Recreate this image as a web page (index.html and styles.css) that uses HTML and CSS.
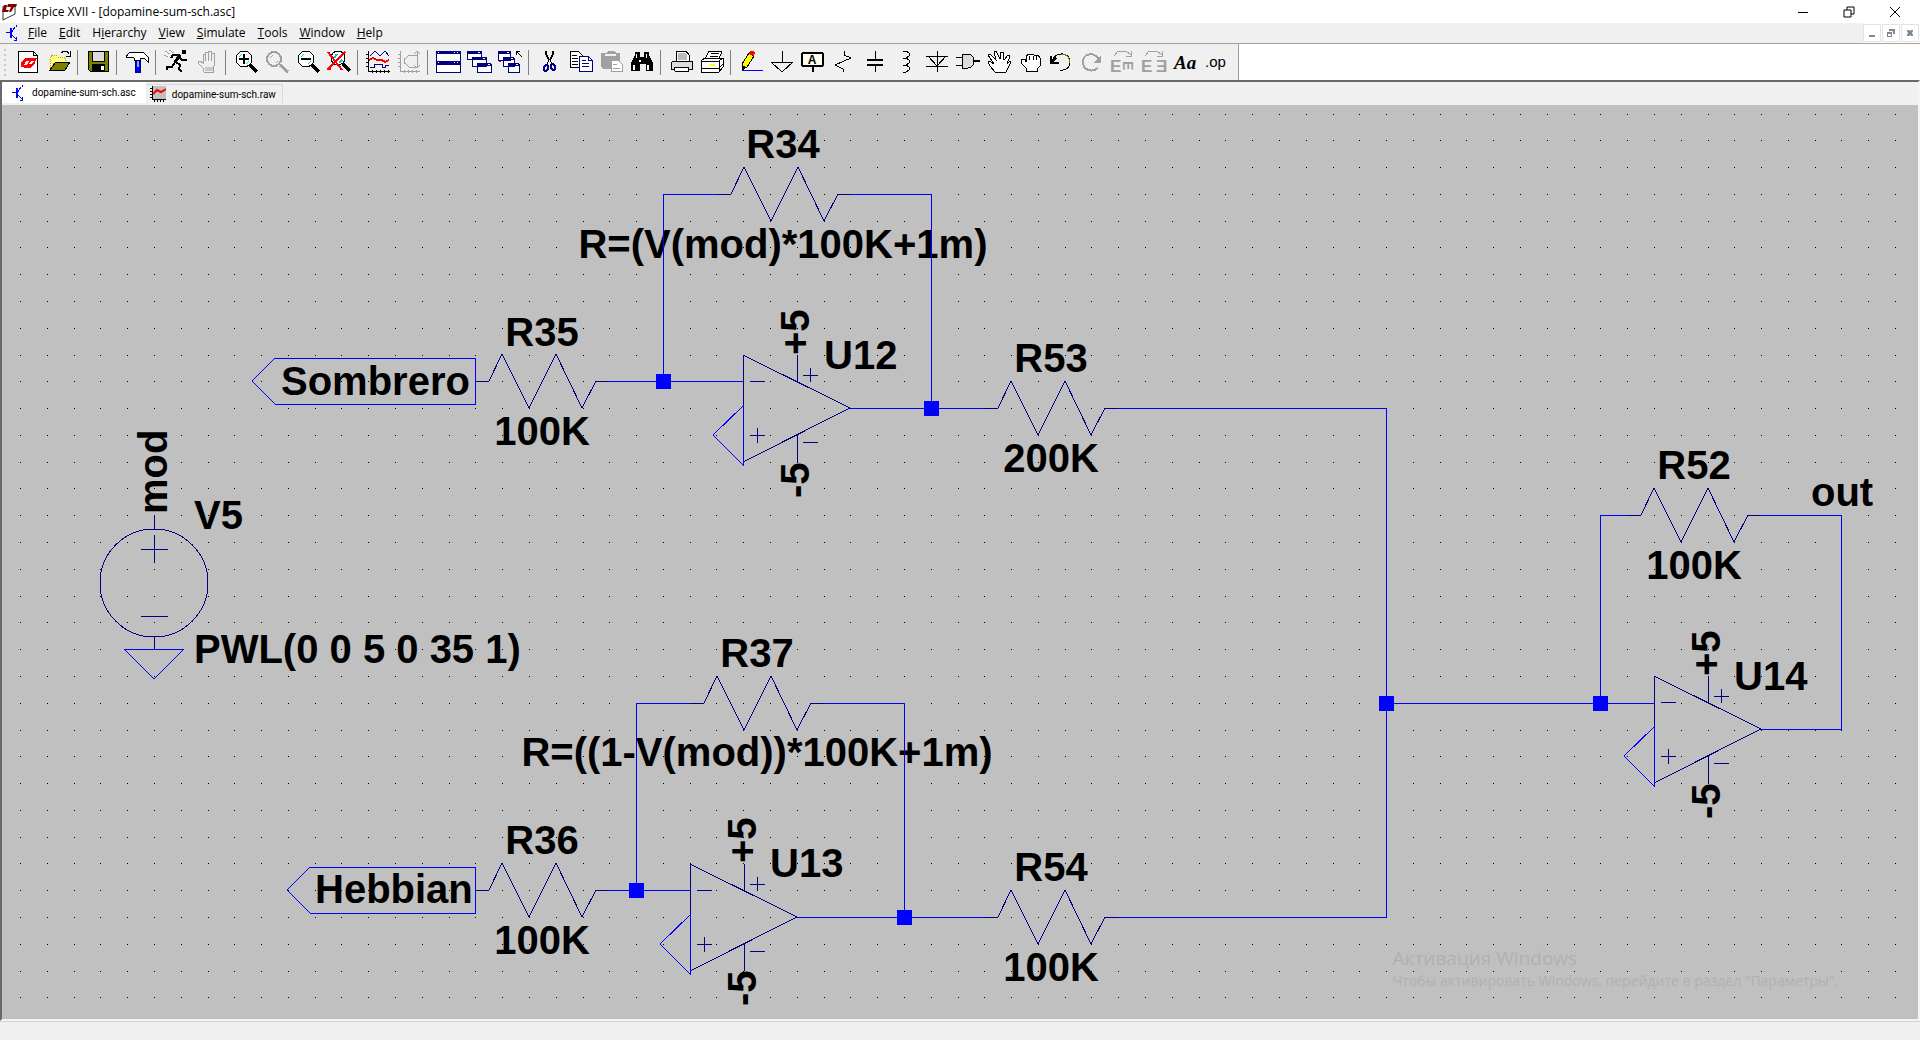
FILE: index.html
```html
<!DOCTYPE html>
<html lang="en">
<head>
<meta charset="utf-8">
<title>LTspice XVII - [dopamine-sum-sch.asc]</title>
<link rel="stylesheet" href="styles.css">
</head>
<body>
<div class="app">
  <header class="titlebar">
    <svg class="app-icon" width="16" height="18" viewBox="0 0 16 18"><path d="M2 3V17L14 11V1" fill="#fff" stroke="#333"/><path d="M3 2h3l-1 5h3l-1 2H1zM7 1h9l-1 3h-2l-3 5H8l2-5H6z" fill="#800000"/></svg>
    <h1 class="title">LTspice XVII - [dopamine-sum-sch.asc]</h1>
    <div class="window-buttons">
      <button class="window-button" aria-label="Minimize"><svg width="12" height="12"><path d="M1 6h10v1H1z"/></svg></button>
      <button class="window-button" aria-label="Restore"><svg width="12" height="12" class="line"><path d="M1 4h7v7h-7zM4 4V1h7v7H8"/></svg></button>
      <button class="window-button" aria-label="Close"><svg width="12" height="12" class="line"><path d="M1 1L11 11M11 1L1 11"/></svg></button>
    </div>
  </header>
  <nav class="menubar" aria-label="Main menu">
    <svg class="menu-icon blue-line" width="16" height="18" viewBox="0 0 16 18"><path d="M2 8h4M7 9l4-6M7 10l5 5M12 1v2M12 13v4M10 16h3"/><path class="bar" d="M7 4v10"/></svg>
    <button class="menu"><u>F</u>ile</button>
    <button class="menu"><u>E</u>dit</button>
    <button class="menu">H<u>i</u>erarchy</button>
    <button class="menu"><u>V</u>iew</button>
    <button class="menu"><u>S</u>imulate</button>
    <button class="menu"><u>T</u>ools</button>
    <button class="menu"><u>W</u>indow</button>
    <button class="menu"><u>H</u>elp</button>
    <div class="mdi-buttons">
      <button class="mdi-button" aria-label="Minimize document"><svg width="10" height="10"><path d="M2 7h6v2H2z"/></svg></button>
      <button class="mdi-button" aria-label="Restore document"><svg width="10" height="10"><path d="M3 1h6v5H7V3H3zM1 4h5v5H1zM2 6v2h3V6z" fill-rule="evenodd"/></svg></button>
      <button class="mdi-button" aria-label="Close document"><svg width="10" height="10"><path d="M2 2h2l1 1 1-1h2v1L7 5l1 2v1H6L5 7 4 8H2V7l1-2-1-2z"/></svg></button>
    </div>
  </nav>
  <div class="toolbar-row">
    <div class="toolbar" role="toolbar" aria-label="Tools">
      <span class="grip"></span>
      <button class="tool" aria-label="New schematic"><svg viewBox="0 0 24 24"><path class="o w" d="M2 1h15l4 4v17H2z"/><path class="o" d="M17 1v4h4"/><path fill="#f00" fill-rule="evenodd" d="M5 17v-5l5-4h11l-3 7-4 3H8l-1-1zM8 15h3l2-4h-3zM13 14h2l3-3h-3z"/></svg></button>
      <button class="tool" aria-label="Open"><svg viewBox="0 0 24 24"><path d="M3 20V8l2-3h4l2 2h7v5H8z" fill="#ffff80" stroke="#c0a000" stroke-dasharray="1 1"/><path class="o olive" d="M3 20l6-8h14l-5 8z"/><path class="o" d="M14 3l3-2h3l2 3M23 1v5h-4"/></svg></button>
      <span class="separator"></span>
      <button class="tool" aria-label="Save"><svg viewBox="0 0 24 24"><path class="o olive" d="M2 1h20v20H4l-2-2z"/><path class="o silver" d="M6 1h12v10H6z"/><path d="M6 14h13v7H6z"/><path fill="#fff" d="M15 16h3v4h-3z"/></svg></button>
      <span class="separator"></span>
      <button class="tool" aria-label="Control panel"><svg viewBox="0 0 24 24"><path class="o w" d="M1 7l3-4 4-1h10l3 3 2 2v5l-3-3-2-1h-3v2H9V8L6 7 2 8z"/><path fill="#00f" stroke="#000080" d="M10 11h5v11h-5z"/><path fill="#8af" d="M12 11h2v6h-2z"/></svg></button>
      <span class="separator"></span>
      <button class="tool" aria-label="Run"><svg viewBox="0 0 24 24"><path d="M18 0h4v4h-4z"/><path class="o thick" d="M16 5l-5 7"/><path class="o bold" d="M16 5H9L7 8M16 8l2 2h5M12 12l4 3-1 4 3 3M11 12l-3 5H3v3"/><path class="gray-line" d="M1 1l5 3M0 5l4 2M5 0l5 3"/></svg></button>
      <button class="tool" aria-label="Halt" disabled><svg viewBox="0 0 24 24"><path fill="#f0f0f0" stroke="#a0a0a0" d="M8 18l-5-5v-2h2l3 2V4h2v7V2h3v9V1h3v10V3h3v13l-1 2v4H9z"/><path fill="#c8c8c8" d="M10 17h8v4h-8z"/></svg></button>
      <span class="separator"></span>
      <button class="tool" aria-label="Zoom in"><svg viewBox="0 0 24 24"><circle class="o w" cx="10" cy="9" r="8"/><path stroke="#0cc" d="M5 7l3-3M12 14l3-3"/><path class="o bold" d="M5 9h10M10 4v10"/><path class="o thick" d="M16 15l7 7"/></svg></button>
      <button class="tool" aria-label="Pan" disabled><svg viewBox="0 0 24 24"><circle cx="9" cy="9" r="7" stroke="#a0a0a0" fill="none" stroke-width="2"/><path class="gray-line" d="M5 8l3-3M11 13l2-2"/><path class="gray-line thick" d="M15 15l8 7"/></svg></button>
      <button class="tool" aria-label="Zoom out"><svg viewBox="0 0 24 24"><circle class="o w" cx="10" cy="9" r="8"/><path stroke="#0cc" d="M5 7l3-3M12 14l3-3"/><path class="o bold" d="M5 9h10"/><path class="o thick" d="M16 15l7 7"/></svg></button>
      <button class="tool" aria-label="Zoom to fit"><svg viewBox="0 0 24 24"><circle class="o w" cx="11" cy="8" r="7"/><path stroke="#0cc" stroke-width="2" d="M7 8l3-4M12 13l3-3"/><path class="o thick" d="M16 14l7 7"/><path fill="none" stroke="#f00" stroke-width="2" d="M1 2l14 18M18 2L1 19M0 19h4"/></svg></button>
      <span class="separator"></span>
      <button class="tool" aria-label="Autorange"><svg viewBox="0 0 24 24"><path class="o" d="M2 1v20h22M0 4h2M0 8h2M0 12h2M0 16h2M6 20v3M10 20v3M14 20v3M18 20v3M22 20v3"/><path fill="none" stroke="#000080" d="M4 6l5-5 5 5 5-5 4 5M4 17h4v-3h8v3h3v-2h4"/><path fill="none" stroke="#f00" stroke-width="2" d="M3 10l4-2 4 2h5l3 2 4-2"/></svg></button>
      <button class="tool" aria-label="FFT" disabled><svg viewBox="0 0 24 24"><path class="gray-line" d="M3 1v20h20M1 4h2M1 8h2M1 12h2M1 16h2M7 20v3M11 20v3M15 20v3M19 20v3M7 10l5-5h8M7 12l5 5h8M7 8v6M20 2v16M17 4l3-3 3 3M17 15l3 3 3-3"/></svg></button>
      <span class="separator"></span>
      <button class="tool" aria-label="Tile windows"><svg viewBox="0 0 24 24"><path fill="#fff" stroke="#000080" d="M0 1h24v10H0zM0 12h24v10H0z"/><path fill="#000080" d="M0 1h24v3H0zM0 11h24v4H0z"/><path fill="#fff" d="M2 2h1v1H2zM18 2h1v1h-1zM21 2h1v1h-1zM2 12h1v1H2zM18 12h1v1h-1zM21 12h1v1h-1z"/></svg></button>
      <button class="tool" aria-label="Cascade"><svg viewBox="0 0 24 24"><g fill="#fff" stroke="#000080"><path d="M0 1h14v8H0zM5 8h14v8H5zM10 14h14v8H10z"/></g><path fill="#000080" d="M0 1h15v3H0zM5 7h15v3H5zM10 13h14v3H10z"/><path fill="#fff" d="M11 2h2v1h-2zM16 8h2v1h-2zM21 14h2v1h-2z"/></svg></button>
      <button class="tool" aria-label="Close all"><svg viewBox="0 0 24 24"><g fill="#fff" stroke="#000080"><path d="M0 1h12v9H0zM5 8h11v8H5zM10 14h11v8H10z"/></g><path fill="#000080" d="M0 1h13v3H0zM5 7h11v3H5zM10 13h11v3H10z"/><path fill="#fff" d="M9 2h2v1H9zM13 8h2v1h-2zM18 14h2v1h-2z"/><path class="o" d="M24 7l-6-6v4M18 1h4"/><path fill="#f00" d="M1 11h2v1H1z"/></svg></button>
      <span class="separator"></span>
      <button class="tool" aria-label="Cut"><svg viewBox="0 0 24 24"><path class="o bold" d="M9 1v3l3 6M16 1v3l-3 6"/><path class="o" d="M12 10l-2 4M13 10l2 4"/><g fill="none" stroke="#000080" stroke-width="2"><ellipse cx="9" cy="18" rx="2" ry="3" transform="rotate(20 9 18)"/><ellipse cx="16" cy="17" rx="2" ry="3" transform="rotate(-20 16 17)"/></g></svg></button>
      <button class="tool" aria-label="Copy"><svg viewBox="0 0 24 24"><path class="o w" d="M2 1h8l4 4v12H2z"/><path class="o" d="M4 5h5M4 8h6M4 11h6M4 14h6"/><path fill="#fff" stroke="#000080" d="M11 6h9l4 4v11H11z"/><path fill="none" stroke="#000080" d="M20 6v4h4M14 10h4M14 13h7M14 16h7"/></svg></button>
      <button class="tool" aria-label="Paste" disabled><svg viewBox="0 0 24 24"><path fill="#a0a0a0" d="M2 3h5l2-2h6l2 2h4v16H4l-2-2z"/><path fill="#f0f0f0" d="M6 4h11v2H6z"/><path fill="#fff" stroke="#a0a0a0" d="M12 10h7l4 4v7H12z"/><path class="gray-line" d="M14 14h4M14 18h7"/></svg></button>
      <button class="tool" aria-label="Find"><svg viewBox="0 0 24 24"><path d="M1 21v-8l4-8V2h5v5h4V2h5v3l4 8v8h-7v-7h-6v7z"/><path fill="#fff" d="M3 15h2v5H3zM17 15h2v5h-2zM6 4h1v4H6zM16 4h1v4h-1zM9 10h2v2H9z"/></svg></button>
      <span class="separator"></span>
      <button class="tool" aria-label="Print"><svg viewBox="0 0 24 24"><path class="o w" d="M8 1h9l3 4v6H7z"/><path fill="#bbb" d="M9 3h7l2 2v5H9z"/><path class="o silver" d="M4 11h19v8H2v-6z"/><path class="o w" d="M5 17h14v4H6z"/></svg></button>
      <button class="tool" aria-label="Print setup"><svg viewBox="0 0 24 24"><path class="o w" d="M9 1h13l-3 8H5z"/><path class="o" d="M11 3h8M10 6h8"/><path class="o w" d="M1 11l4-3h18v9l-4 5H1z"/><path class="o" d="M1 11h18v11M19 11l4-3M1 18h18l4-4"/><path fill="#ff0" d="M10 14h5v2h-5z"/></svg></button>
      <span class="separator"></span>
      <button class="tool" aria-label="Draw wire"><svg viewBox="0 0 24 24"><path fill="#00f" d="M3 20h21v1H3z"/><path fill="#ff0" stroke="#000" d="M3 20v-6l7-11 5 3-7 11z"/><path d="M3 21v-6l4 2z"/><path fill="#f00" d="M11 1h3l2 2-1 3-5-2z"/></svg></button>
      <button class="tool" aria-label="Ground"><svg viewBox="0 0 24 24"><path class="o" d="M12 1v11M1 12h22L12 22z"/></svg></button>
      <button class="tool" aria-label="Label net"><svg viewBox="0 0 24 24"><rect x="1" y="3" width="21" height="13" rx="2" fill="#ffe" stroke="#000" stroke-width="2"/><path d="M11 16h2v6h-2z"/><text x="11" y="14" text-anchor="middle" class="icon-text label-letter">A</text></svg></button>
      <button class="tool" aria-label="Resistor"><svg viewBox="0 0 24 24"><path class="o" d="M12 1v4l7 3L3 15l8 4v3"/></svg></button>
      <button class="tool" aria-label="Capacitor"><svg viewBox="0 0 24 24"><path d="M4 9h16v2H4zM4 14h16v2H4zM12 1h1v8h-1zM12 16h1v6h-1z"/></svg></button>
      <button class="tool" aria-label="Inductor"><svg viewBox="0 0 24 24"><path class="o" d="M9 1h3l3 2v3l-3 2H9M12 8l3 2v3l-3 2H9M12 15l3 2v3l-3 2H9"/></svg></button>
      <button class="tool" aria-label="Diode"><svg viewBox="0 0 24 24"><path class="o" d="M12 1v21M1 6h22M3 6l9 10 9-10M1 16h22"/></svg></button>
      <button class="tool" aria-label="Component"><svg viewBox="0 0 24 24"><path class="o silver" d="M6 4h6c8 1 8 13 0 14H6z"/><path class="o" d="M0 7h6M0 15h6"/><path class="o bold" d="M18 11h6"/></svg></button>
      <button class="tool" aria-label="Move"><svg viewBox="0 0 24 24"><path class="o w" d="M8 22l-5-6-2-4 2-1 4 3L1 5l2-1 6 6L7 2l2-1 4 8 1-7h2l1 8 4-5 2 1-3 8 3-3 1 1-5 10z"/></svg></button>
      <button class="tool" aria-label="Drag"><svg viewBox="0 0 24 24"><path class="o w" d="M8 21v-3l-5-5V9h4l1 3V6l3-2 2 1 2-1 2 2 3-1 2 3v8l-3 3v2z"/><path class="o" d="M11 6v4M15 6v4M18 6v4"/></svg></button>
      <button class="tool" aria-label="Undo"><svg viewBox="0 0 24 24"><path class="o" d="M3 11C7 1 21 2 21 12c0 6-5 9-10 8"/><path fill="none" stroke="#808000" d="M12 4c6 0 9 4 9 9"/><path class="o bold" d="M2 6v7h8M3 12l4-4"/></svg></button>
      <button class="tool" aria-label="Redo" disabled><svg viewBox="0 0 24 24"><path class="gray-line bold" d="M19 10C16 2 3 2 3 12c0 8 9 11 15 6"/><path fill="#a0a0a0" d="M21 5v8h-8z"/></svg></button>
      <button class="tool" aria-label="Rotate" disabled><svg viewBox="0 0 24 24"><path class="gray-line" d="M3 6l4-5h8l5 4M20 1v5h-5"/><text x="-1" y="22" class="icon-text gray-letter">E</text><text transform="translate(12 12) rotate(90)" x="-1" y="0" class="icon-text gray-letter turned">E</text></svg></button>
      <button class="tool" aria-label="Mirror" disabled><svg viewBox="0 0 24 24"><path class="gray-line" d="M3 6l4-5h8l5 4M20 1v5h-5"/><text x="-1" y="22" class="icon-text gray-letter">E</text><text x="14" y="22" class="icon-text gray-letter">Ǝ</text></svg></button>
      <button class="tool" aria-label="Text"><svg viewBox="0 0 24 24"><text x="1" y="19" class="icon-text serif-letter">Aa</text></svg></button>
      <button class="tool" aria-label="SPICE directive"><svg viewBox="0 0 24 24"><text x="1" y="17" class="icon-text op-letter">.op</text></svg></button>
    </div>
  </div>
  <main class="workspace">
    <div class="tabs" role="tablist">
      <button class="tab tab-active" role="tab" aria-selected="true"><svg class="blue-line" width="16" height="18" viewBox="0 0 16 18"><path d="M2 8h4M7 9l4-6M7 10l5 5M12 1v2M12 13v4M10 16h3"/><path class="bar" d="M7 4v10"/></svg>dopamine-sum-sch.asc</button>
      <button class="tab" role="tab" aria-selected="false"><svg width="16" height="16" viewBox="0 0 16 16"><path fill="#c0c0c0" d="M2 0h14v13H2z"/><path d="M2 0h1v13h13v1H2zM0 2h2v1H0zM0 5h2v1H0zM0 8h2v1H0zM0 11h2v1H0zM4 14h1v2H4zM7 14h1v2H7zM10 14h1v2h-1zM13 14h1v2h-1z"/><path d="M3 8l4-4 4 2 5-3" fill="none" stroke="#f00" stroke-width="2"/></svg>dopamine-sum-sch.raw</button>
    </div>
    <div class="canvas">
      <svg class="schematic" width="100%" height="100%" role="img" aria-label="Schematic dopamine-sum-sch">
        <defs>
          <path id="resistor" d="M0 0h14l13-27 27 54 27-54 26 54 14-27h13"/>
          <g id="opamp">
            <path d="M0-53L107 0L0 54zM7-27h15M7 27h15M14 20v15M54-53v27M54 27v27M60-33h15M67-40v14M60 34h15"/>
            <path class="wire" d="M0-2L-30 27L0 57z"/>
          </g>
          <rect id="junction" x="-7" y="-7" width="15" height="15"/>
        </defs>
        <path id="grid" class="grid"/>
        <g transform="translate(-2 -105)">
          <g class="names">
            <text class="mid" x="783" y="158">R34</text>
            <text class="mid" x="783" y="258">R=(V(mod)*100K+1m)</text>
            <text class="mid" x="542" y="346">R35</text>
            <text class="mid" x="542" y="445">100K</text>
            <text class="mid" x="1051" y="372">R53</text>
            <text class="mid" x="1051" y="472">200K</text>
            <text class="mid" x="1694" y="479">R52</text>
            <text class="mid" x="1694" y="579">100K</text>
            <text class="mid" x="757" y="667">R37</text>
            <text class="mid" x="757" y="766">R=((1-V(mod))*100K+1m)</text>
            <text class="mid" x="542" y="854">R36</text>
            <text class="mid" x="542" y="954">100K</text>
            <text class="mid" x="1051" y="881">R54</text>
            <text class="mid" x="1051" y="981">100K</text>
            <text x="824" y="369">U12</text>
            <text x="770" y="877">U13</text>
            <text x="1734" y="690">U14</text>
            <text x="194" y="529">V5</text>
            <text x="194" y="663">PWL(0 0 5 0 35 1)</text>
            <text x="1811" y="506">out</text>
            <text x="281" y="395">Sombrero</text>
            <text x="315" y="903">Hebbian</text>
            <text transform="translate(167 514) rotate(-90)">mod</text>
            <text transform="translate(809 355) rotate(-90)">+5</text>
            <text transform="translate(809 498) rotate(-90)">-5</text>
            <text transform="translate(756 863) rotate(-90)">+5</text>
            <text transform="translate(756 1006) rotate(-90)">-5</text>
            <text transform="translate(1720 676) rotate(-90)">+5</text>
            <text transform="translate(1720 819) rotate(-90)">-5</text>
          </g>
          <g class="wire">
            <path d="M717 194H663V381M851 194H931V408M609 381H743M850 408H984M1118 408H1386V917H1118M1386 703H1654M1600 703V515H1627M1761 515H1841V729H1761M690 703H636V890M824 703H904V917M609 890H690M797 917H984"/>
            <path d="M475 358H275L252 381L275 404H475zM475 867H310L287 890L310 913H475z"/>
            <path d="M124 649H184L154 679z"/>
          </g>
          <g class="part">
            <use href="#resistor" x="475" y="381"/>
            <use href="#resistor" x="717" y="194"/>
            <use href="#resistor" x="984" y="408"/>
            <use href="#resistor" x="1627" y="515"/>
            <use href="#resistor" x="690" y="703"/>
            <use href="#resistor" x="475" y="890"/>
            <use href="#resistor" x="984" y="917"/>
            <use href="#opamp" x="743" y="408"/>
            <use href="#opamp" x="690" y="917"/>
            <use href="#opamp" x="1654" y="729"/>
            <circle cx="154" cy="583" r="54"/>
            <path d="M154 515V529M154 636V649M141 549H168M154 535V563M141 616H168"/>
          </g>
          <g class="junctions">
            <use href="#junction" x="663" y="381"/>
            <use href="#junction" x="931" y="408"/>
            <use href="#junction" x="636" y="890"/>
            <use href="#junction" x="904" y="917"/>
            <use href="#junction" x="1386" y="703"/>
            <use href="#junction" x="1600" y="703"/>
          </g>
        </g>
      </svg>
      <div class="activation" lang="ru">
        <p class="activation-title">Активация Windows</p>
        <p class="activation-text">Чтобы активировать Windows, перейдите в раздел "Параметры".</p>
      </div>
    </div>
  </main>
  <footer class="statusbar"></footer>
</div>
<script src="grid.js"></script>
</body>
</html>
```
FILE: styles.css
```css
* { box-sizing: border-box; }
body { margin: 0; font-family: "Open Sans", "Noto Sans", sans-serif; font-size: 12px; color: #000; background: #f0f0f0; }
button { margin: 0; padding: 0; border: 0; background: none; font: inherit; color: inherit; }
svg { display: block; flex: none; }
.app { display: flex; flex-direction: column; height: 100vh; overflow: hidden; }

.titlebar { display: flex; align-items: center; height: 23px; padding: 0 2px 0 1px; background: #fff; }
.title { flex: 1; margin: 0 0 0 6px; font-size: 12px; font-weight: 400; line-height: 20px; white-space: nowrap; }
.window-buttons { display: flex; }
.window-button { display: flex; align-items: center; justify-content: center; width: 46px; height: 20px; }
.line path { fill: none; stroke: #000; }

.menubar { display: flex; align-items: center; height: 20px; padding-left: 4px; background: #f0f0f0; }
.menu-icon { margin-right: 2px; }
.blue-line { shape-rendering: crispEdges; }
.blue-line path { fill: none; stroke: #00f; }
.blue-line .bar { stroke-width: 2; }
.menu { padding: 0 6px; line-height: 20px; }
.mdi-buttons { display: flex; align-items: center; gap: 1px; height: 20px; margin-left: auto; padding-right: 1px; background: #fff; }
.mdi-button { display: flex; align-items: center; justify-content: center; width: 18px; height: 18px; border: 1px solid #e3e3e3; background: #fff; }
.mdi-button svg { fill: #778899; }

.toolbar-row { display: flex; height: 37px; border-top: 1px solid #a0a0a0; background: #fff; }
.toolbar { display: flex; align-items: center; padding-right: 6px; border-right: 1px solid #a0a0a0; background: #f0f0f0; }
.grip { width: 2px; height: 27px; margin: 0 7px 0 4px; background: repeating-linear-gradient(#c8c8c8 0 2px, #f0f0f0 2px 5px); }
.tool { width: 31px; height: 24px; padding-left: 3px; }
.tool svg { width: 24px; height: 24px; overflow: visible; shape-rendering: crispEdges; }
.separator { width: 6px; height: 25px; margin-left: 2px; border-left: 1px solid #808080; }
.o { fill: none; stroke: #000; }
.w { fill: #fff; }
.olive { fill: #808000; }
.silver { fill: #dcdcdc; }
.gray-line { fill: none; stroke: #a0a0a0; }
.bold { stroke-width: 2; }
.thick { stroke-width: 3; }
.icon-text { font-family: "Liberation Sans", Arial, sans-serif; font-weight: 700; }
.label-letter { font-size: 12px; }
.gray-letter { font-size: 17px; fill: #a0a0a0; }
.turned { font-size: 14px; }
.serif-letter { font-family: "Liberation Serif", "Times New Roman", serif; font-style: italic; font-size: 19px; }
.op-letter { font-size: 15px; font-weight: 400; }

.workspace { display: flex; flex: 1; flex-direction: column; min-height: 0; border: 2px solid #696969; border-right-color: #f4f4f4; border-bottom-color: #f4f4f4; }
.tabs { display: flex; align-items: flex-start; height: 23px; background: #f0f0f0; }
.tab { display: flex; align-items: center; gap: 6px; height: 19px; margin-top: 2px; padding: 0 6px 0 4px; border: 1px solid #d9d9d9; border-width: 1px 1px 0 0; font-family: Roboto, "Liberation Sans", sans-serif; font-size: 10px; white-space: nowrap; }
.tab-active { height: 21px; margin-top: 0; padding: 0 10px 0 8px; border: 0; background: #fff; }

.canvas { position: relative; flex: 1; min-height: 0; background: #c0c0c0; }
.schematic { position: absolute; inset: 0; overflow: hidden; shape-rendering: crispEdges; }
.grid { fill: #000; }
.names { font: 700 40px/40px "Liberation Sans", Arial, sans-serif; }
.mid { text-anchor: middle; }
.wire { fill: none; stroke: #00f; }
.part { fill: none; stroke: #000080; }
.junctions { fill: #00f; }
.activation { position: absolute; right: 80px; bottom: 28px; color: #b0b0b0; white-space: nowrap; }
.activation p { margin: 0; }
.activation-title { font-size: 19px; line-height: 26px; }
.activation-text { font-size: 14px; line-height: 20px; }

.statusbar { height: 19px; border-top: 1px solid #d5d5d5; background: #f0f0f0; }
```
FILE: grid.js
```js
// Draws the one-pixel snap grid across the whole canvas.
const pitchX = 26.786, pitchY = 26.785;
const originX = 18, originY = 8.5;
const grid = document.getElementById('grid');

function drawGrid() {
  const { width, height } = grid.ownerSVGElement.getBoundingClientRect();
  let d = '';
  for (let j = 0, y = originY; y < height - 8; y = originY + ++j * pitchY) {
    for (let i = 0, x = originX; x < width - 8; x = originX + ++i * pitchX) {
      d += `M${Math.round(x)} ${Math.round(y)}h1v1h-1z`;
    }
  }
  grid.setAttribute('d', d);
}

drawGrid();
window.addEventListener('resize', drawGrid);
```
